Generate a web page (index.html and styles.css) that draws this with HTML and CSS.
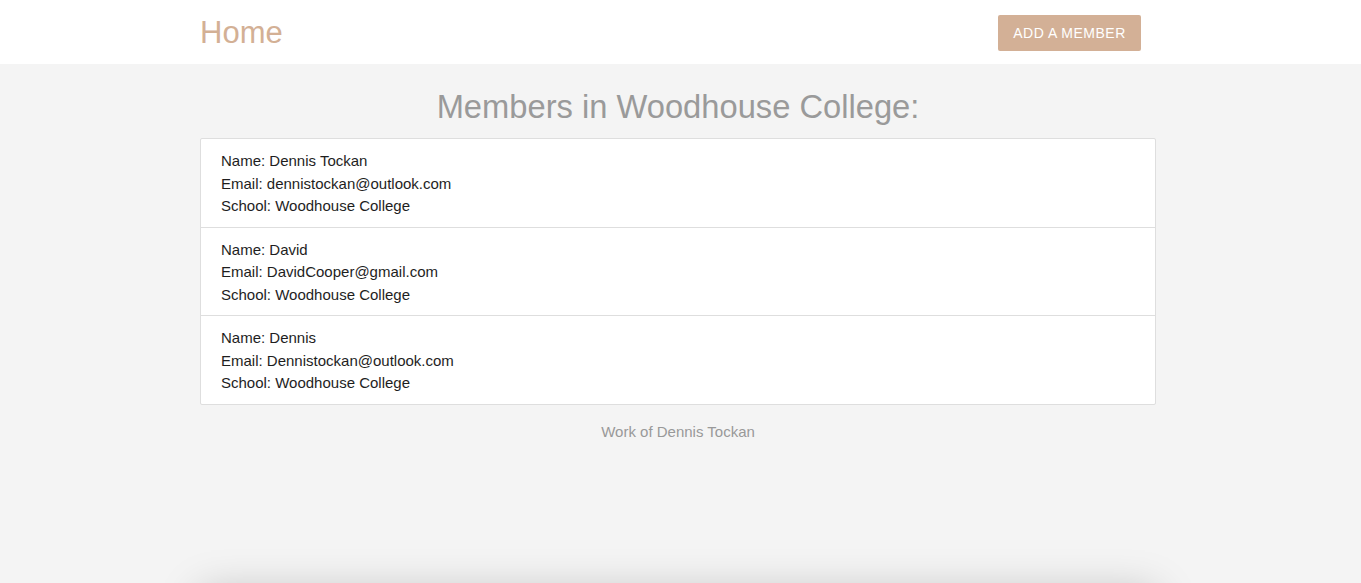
FILE: index.html
```html
<!DOCTYPE html>
<html>
<head>
<meta charset="utf-8">
<link rel="stylesheet" href="styles.css">
</head>
<body>
<header class="navbar">
  <div class="container nav-inner">
    <a class="brand">Home</a>
    <button class="add-btn">ADD A MEMBER</button>
  </div>
</header>
<main class="container">
  <h1 class="title">Members in Woodhouse College:</h1>
  <ul class="list">
    <li class="item">
      <div>Name: Dennis Tockan</div>
      <div>Email: dennistockan@outlook.com</div>
      <div>School: Woodhouse College</div>
    </li>
    <li class="item">
      <div>Name: David</div>
      <div>Email: DavidCooper@gmail.com</div>
      <div>School: Woodhouse College</div>
    </li>
    <li class="item">
      <div>Name: Dennis</div>
      <div>Email: Dennistockan@outlook.com</div>
      <div>School: Woodhouse College</div>
    </li>
  </ul>
  <p class="credit">Work of Dennis Tockan</p>
  <div class="panel"></div>
</main>
</body>
</html>
```
FILE: styles.css
```css
* { box-sizing: border-box; }
html, body { margin: 0; padding: 0; }
body {
  background: #f4f4f4;
  font-family: "Liberation Sans", Arial, sans-serif;
  color: #212529;
  overflow: hidden;
  height: 583px;
}
.container {
  width: 956px;
  margin-left: 200px;
}
.navbar {
  background: #fff;
  height: 64px;
}
.nav-inner {
  display: flex;
  align-items: center;
  justify-content: space-between;
  height: 64px;
  width: 941px;
}
.brand {
  font-size: 31px;
  color: #d3b095;
  line-height: 1;
  margin-top: 1px;
}
.add-btn {
  background: #d3b096;
  color: #fff;
  border: 0;
  border-radius: 2px;
  height: 36px;
  width: 143px;
  padding: 0;
  font-family: "Liberation Sans", Arial, sans-serif;
  font-size: 14px;
  letter-spacing: 0.5px;
  margin-top: 2px;
}
.title {
  margin: 0;
  padding-top: 23px;
  height: 74px;
  text-align: center;
  font-weight: 400;
  font-size: 32.7px;
  line-height: 40px;
  color: #9a9a9a;
}
.list {
  list-style: none;
  margin: 0;
  padding: 0;
  background: #fff;
  border: 1px solid #dedede;
  border-radius: 2px;
}
.item {
  padding: 10px 20px 10px 20px;
  font-size: 15px;
  line-height: 22.5px;
  color: #1e1e1e;
}
.item div { padding-top: 1px; margin-bottom: -1px; }
.item + .item { border-top: 1px solid #dedede; }
.credit {
  margin: 17px 0 0;
  text-align: center;
  font-size: 15px;
  line-height: 20px;
  color: #999;
}
.panel {
  margin-top: 150px;
  height: 200px;
  background: #f4f4f4;
  box-shadow: 0 0 40px rgba(0,0,0,0.22);
}
```
